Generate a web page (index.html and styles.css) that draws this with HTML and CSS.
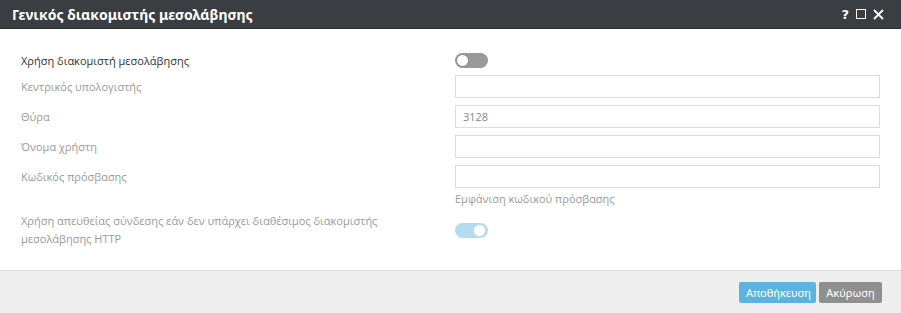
FILE: index.html
```html
<!DOCTYPE html>
<html lang="el">
<head>
    <meta charset="UTF-8">
    <title>Γενικός διακομιστής μεσολάβησης</title>
    <link rel="stylesheet" href="styles.css">
</head>
<body>
    <div class="dialog">
        <div class="titlebar">
            <div class="title">Γενικός διακομιστής μεσολάβησης</div>
            <div class="tools">
                <span class="tool help">?</span>
                <span class="tool max"></span>
                <svg class="tool close" width="11" height="11" viewBox="0 0 11 11">
                    <path d="M1 1 L10 10 M10 1 L1 10" stroke="#fff" stroke-width="1.8"/>
                </svg>
            </div>
        </div>

        <div class="content">
            <div class="row first">
                <label class="label dark">Χρήση διακομιστή μεσολάβησης</label>
                <div class="control"><span class="toggle"></span></div>
            </div>
            <div class="row">
                <label class="label">Κεντρικός υπολογιστής</label>
                <div class="control"><input class="field" type="text"></div>
            </div>
            <div class="row">
                <label class="label">Θύρα</label>
                <div class="control"><input class="field" type="text" value="3128"></div>
            </div>
            <div class="row">
                <label class="label">Όνομα χρήστη</label>
                <div class="control"><input class="field" type="text"></div>
            </div>
            <div class="row">
                <label class="label">Κωδικός πρόσβασης</label>
                <div class="control"><input class="field" type="password"></div>
            </div>
            <div class="row hint-row">
                <div class="label"></div>
                <div class="control"><span class="hint">Εμφάνιση κωδικού πρόσβασης</span></div>
            </div>
            <div class="row tall">
                <label class="label wrap">Χρήση απευθείας σύνδεσης εάν δεν υπάρχει διαθέσιμος διακομιστής μεσολάβησης HTTP</label>
                <div class="control"><span class="toggle on"></span></div>
            </div>
        </div>

        <div class="footer">
            <button class="btn primary">Αποθήκευση</button>
            <button class="btn cancel">Ακύρωση</button>
        </div>
    </div>
</body>
</html>
```

FILE: styles.css
```css
body {
    margin: 0;
    font-family: "Open Sans", "Noto Sans", sans-serif;
    background: #fff;
    overflow: hidden;
}
.dialog {
    width: 901px;
    height: 313px;
    display: flex;
    flex-direction: column;
}
.titlebar {
    height: 29px;
    background: #3a3d42;
    border-bottom: 1px solid #2b2d31;
    box-sizing: border-box;
    display: flex;
    align-items: center;
    padding: 0 17px 0 12px;
}
.title {
    flex: 1;
    color: #fff;
    font-family: "Noto Sans", sans-serif;
    font-weight: bold;
    font-size: 14px;
}
.tools {
    display: flex;
    align-items: center;
    gap: 7px;
}
.tool.help {
    color: #fff;
    font-weight: bold;
    font-size: 13px;
    font-family: "DejaVu Sans", sans-serif;
}
.tool.max {
    width: 8px;
    height: 8px;
    border: 1.5px solid #fff;
}
.content {
    flex: 1;
    padding: 20px 21px 0 21px;
}
.row {
    display: flex;
    align-items: center;
    min-height: 23px;
    margin-bottom: 7px;
}
.row.first {
    margin-bottom: 3px;
}
.label {
    width: 434px;
    flex-shrink: 0;
    font-size: 11px;
    color: #9a9a9a;
}
.label.dark {
    color: #333;
}
.label.wrap {
    width: 390px;
    margin-right: 44px;
    line-height: 18px;
}
.control {
    flex: 1;
    display: flex;
    align-items: center;
}
.field {
    width: 100%;
    height: 23px;
    box-sizing: border-box;
    border: 1px solid #dcdcdc;
    padding: 0 7px;
    font-family: inherit;
    font-size: 11px;
    color: #888;
    outline: none;
}
.row.hint-row {
    min-height: 0;
    margin: -4px 0 0;
}
.hint {
    font-size: 11px;
    color: #9a9a9a;
}
.row.tall {
    margin-top: 6px;
}
.toggle {
    position: relative;
    display: inline-block;
    width: 33px;
    height: 15px;
    border-radius: 8px;
    background: #999;
}
.toggle:before {
    content: "";
    position: absolute;
    left: 1px;
    top: 1px;
    width: 11px;
    height: 11px;
    border-radius: 50%;
    background: #fff;
    border: 1px solid #888;
}
.toggle.on {
    background: #b4dcf1;
}
.toggle.on:before {
    left: auto;
    right: 2px;
    border-color: #b4dcf1;
}
.footer {
    height: 43px;
    box-sizing: border-box;
    background: #eeeeee;
    border-top: 1px solid #dedede;
    display: flex;
    justify-content: flex-end;
    align-items: center;
    gap: 3px;
    padding: 0 19px 0 0;
}
.btn {
    height: 21px;
    border: none;
    border-radius: 2px;
    color: #fff;
    font-family: "Noto Sans", sans-serif;
    font-size: 11px;
    padding: 0 7px;
}
.btn.primary {
    background: #5bb4e0;
    width: 77px;
}
.btn.cancel {
    background: #8f8f8f;
    width: 63px;
}
```
